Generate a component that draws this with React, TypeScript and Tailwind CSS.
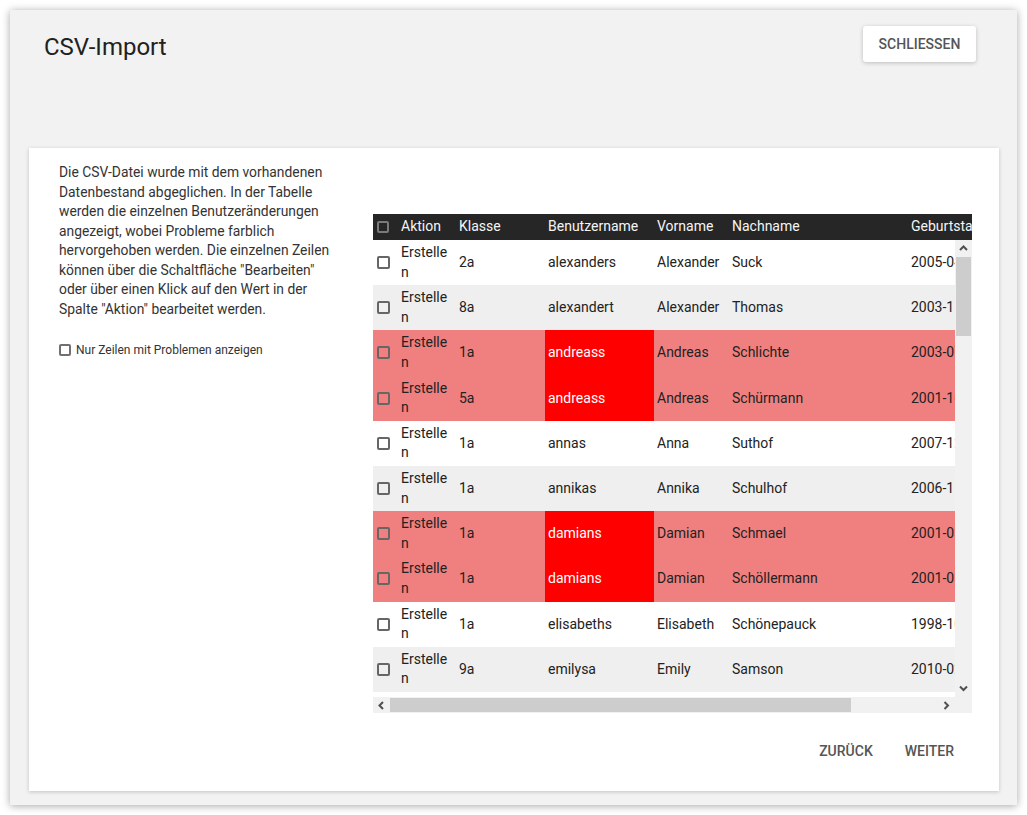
import React from 'react';

type Row = {
  klasse: string;
  user: string;
  vorname: string;
  nachname: string;
  geb: string;
  problem?: boolean;
};

const ROWS: Row[] = [
  { klasse: '2a', user: 'alexanders', vorname: 'Alexander', nachname: 'Suck', geb: '2005-04-12' },
  { klasse: '8a', user: 'alexandert', vorname: 'Alexander', nachname: 'Thomas', geb: '2003-11-02' },
  { klasse: '1a', user: 'andreass', vorname: 'Andreas', nachname: 'Schlichte', geb: '2003-07-21', problem: true },
  { klasse: '5a', user: 'andreass', vorname: 'Andreas', nachname: 'Schürmann', geb: '2001-10-15', problem: true },
  { klasse: '1a', user: 'annas', vorname: 'Anna', nachname: 'Suthof', geb: '2007-12-03' },
  { klasse: '1a', user: 'annikas', vorname: 'Annika', nachname: 'Schulhof', geb: '2006-11-28' },
  { klasse: '1a', user: 'damians', vorname: 'Damian', nachname: 'Schmael', geb: '2001-03-09', problem: true },
  { klasse: '1a', user: 'damians', vorname: 'Damian', nachname: 'Schöllermann', geb: '2001-05-17', problem: true },
  { klasse: '1a', user: 'elisabeths', vorname: 'Elisabeth', nachname: 'Schönepauck', geb: '1998-10-30' },
  { klasse: '9a', user: 'emilysa', vorname: 'Emily', nachname: 'Samson', geb: '2010-02-14' },
  { klasse: '3a', user: 'emmas', vorname: 'Emma', nachname: 'Schneider', geb: '2008-06-01' },
];

function Chevron({ dir }: { dir: 'up' | 'down' | 'left' | 'right' }) {
  const points = {
    up: '1,6 4.5,2.5 8,6',
    down: '1,2.5 4.5,6 8,2.5',
    left: '6,1 2.5,4.5 6,8',
    right: '2.5,1 6,4.5 2.5,8',
  }[dir];
  return (
    <svg width="9" height="9" viewBox="0 0 9 9">
      <polyline points={points} fill="none" stroke="#505050" strokeWidth="2" />
    </svg>
  );
}

function RowCheckbox() {
  return <span className="block h-[13px] w-[13px] rounded-[2px] border-2 border-[#666]" />;
}

export default function App() {
  return (
    <div className="min-h-screen bg-white p-[10px] font-[Roboto,sans-serif]">
      {/* Dialog */}
      <div className="flex h-[795px] w-[1007px] flex-col bg-[#f2f2f2] shadow-[0_1px_8px_rgba(0,0,0,0.35)]">
        {/* Header */}
        <div className="flex h-[138px] shrink-0 items-start justify-between pl-[34px] pr-[41px]">
          <h1 className="mt-[22px] text-[24px] leading-[30px] font-normal text-[#212121]">CSV-Import</h1>
          <button className="mt-[16px] h-[36px] w-[113px] rounded-[3px] bg-white text-[14px] font-medium text-[#555] shadow-[0_1px_4px_rgba(0,0,0,0.22)]">
            SCHLIESSEN
          </button>
        </div>

        {/* Card */}
        <div className="ml-[19px] mr-[18px] flex h-[643px] flex-col bg-white pt-[15px] shadow-[0_1px_4px_rgba(0,0,0,0.2)]">
          <div className="flex pl-[30px]">
            {/* Info column */}
            <div className="w-[276px] shrink-0">
              <p className="text-[13.85px] leading-[19.5px] text-[#333]">
                Die CSV-Datei wurde mit dem vorhandenen Datenbestand abgeglichen. In der Tabelle werden die
                einzelnen Benutzeränderungen angezeigt, wobei Probleme farblich hervorgehoben werden. Die
                einzelnen Zeilen können über die Schaltfläche "Bearbeiten" oder über einen Klick auf den Wert
                in der Spalte "Aktion" bearbeitet werden.
              </p>
              <label className="mt-[23px] flex items-center gap-[5px] text-[12px] leading-[16px] text-[#333]">
                <span className="block h-[12px] w-[12px] rounded-[2px] border-2 border-[#707070]" />
                Nur Zeilen mit Problemen anzeigen
              </label>
            </div>

            {/* Table */}
            <div className="ml-[38px] mt-[51px] flex w-[599px] shrink-0 flex-col">
              <div className="flex h-[26px] items-center overflow-hidden whitespace-nowrap bg-[#262626] pb-[1px] text-[14px] text-[#f5f5f5]">
                <div className="flex w-[25px] shrink-0 pl-[4px]">
                  <span className="block h-[12px] w-[12px] rounded-[2px] border-2 border-[#7a7a7a]" />
                </div>
                <div className="w-[58px] shrink-0 pl-[3px]">Aktion</div>
                <div className="w-[89px] shrink-0 pl-[3px]">Klasse</div>
                <div className="w-[109px] shrink-0 pl-[3px]">Benutzername</div>
                <div className="w-[75px] shrink-0 pl-[3px]">Vorname</div>
                <div className="w-[179px] shrink-0 pl-[3px]">Nachname</div>
                <div className="w-[120px] shrink-0 pl-[3px]">Geburtstag</div>
              </div>

              <div className="flex">
                <div className="flex w-[582px] flex-col">
                  <div className="h-[457px] overflow-hidden">
                    {ROWS.map((r, i) => {
                      const bg = r.problem ? 'bg-[#f08080]' : i % 2 === 0 ? 'bg-white' : 'bg-[#efefef]';
                      return (
                        <div key={i} className={`flex h-[45.2px] whitespace-nowrap text-[14px] text-[#222] ${bg}`}>
                          <div className="flex w-[25px] shrink-0 items-center pl-[4px]">
                            <RowCheckbox />
                          </div>
                          <div className="flex w-[58px] shrink-0 items-center pl-[3px] pr-[5px]">
                            <span className="whitespace-normal break-all leading-[19.5px]">Erstellen</span>
                          </div>
                          <div className="flex w-[89px] shrink-0 items-center pl-[3px]">{r.klasse}</div>
                          <div
                            className={`flex w-[109px] shrink-0 items-center pl-[3px] ${
                              r.problem ? 'bg-[#ff0000] text-white' : ''
                            }`}
                          >
                            {r.user}
                          </div>
                          <div className="flex w-[75px] shrink-0 items-center pl-[3px]">{r.vorname}</div>
                          <div className="flex w-[179px] shrink-0 items-center pl-[3px]">{r.nachname}</div>
                          <div className="flex w-[90px] shrink-0 items-center pl-[3px]">{r.geb}</div>
                        </div>
                      );
                    })}
                  </div>
                  {/* Horizontal scrollbar */}
                  <div className="flex h-[16px] items-center bg-[#f1f1f1]">
                    <div className="flex w-[17px] shrink-0 justify-center">
                      <Chevron dir="left" />
                    </div>
                    <div className="h-[14px] w-[461px] shrink-0 bg-[#cdcdcd]" />
                    <div className="flex-1" />
                    <div className="flex w-[17px] shrink-0 justify-center">
                      <Chevron dir="right" />
                    </div>
                  </div>
                </div>

                {/* Vertical scrollbar */}
                <div className="flex w-[17px] shrink-0 flex-col bg-[#f1f1f1]">
                  <div className="flex h-[17px] items-center justify-center">
                    <Chevron dir="up" />
                  </div>
                  <div className="mx-[1px] h-[79px] bg-[#cdcdcd]" />
                  <div className="flex-1" />
                  <div className="flex h-[17px] items-center justify-center">
                    <Chevron dir="down" />
                  </div>
                  <div className="h-[16px]" />
                </div>
              </div>
            </div>
          </div>

          {/* Footer */}
          <div className="mt-[20px] flex justify-end pr-[29px]">
            <button className="h-[36px] px-[16px] text-[14px] font-medium text-[#555]">ZURÜCK</button>
            <button className="h-[36px] px-[16px] text-[14px] font-medium text-[#555]">WEITER</button>
          </div>
        </div>
      </div>
    </div>
  );
}
